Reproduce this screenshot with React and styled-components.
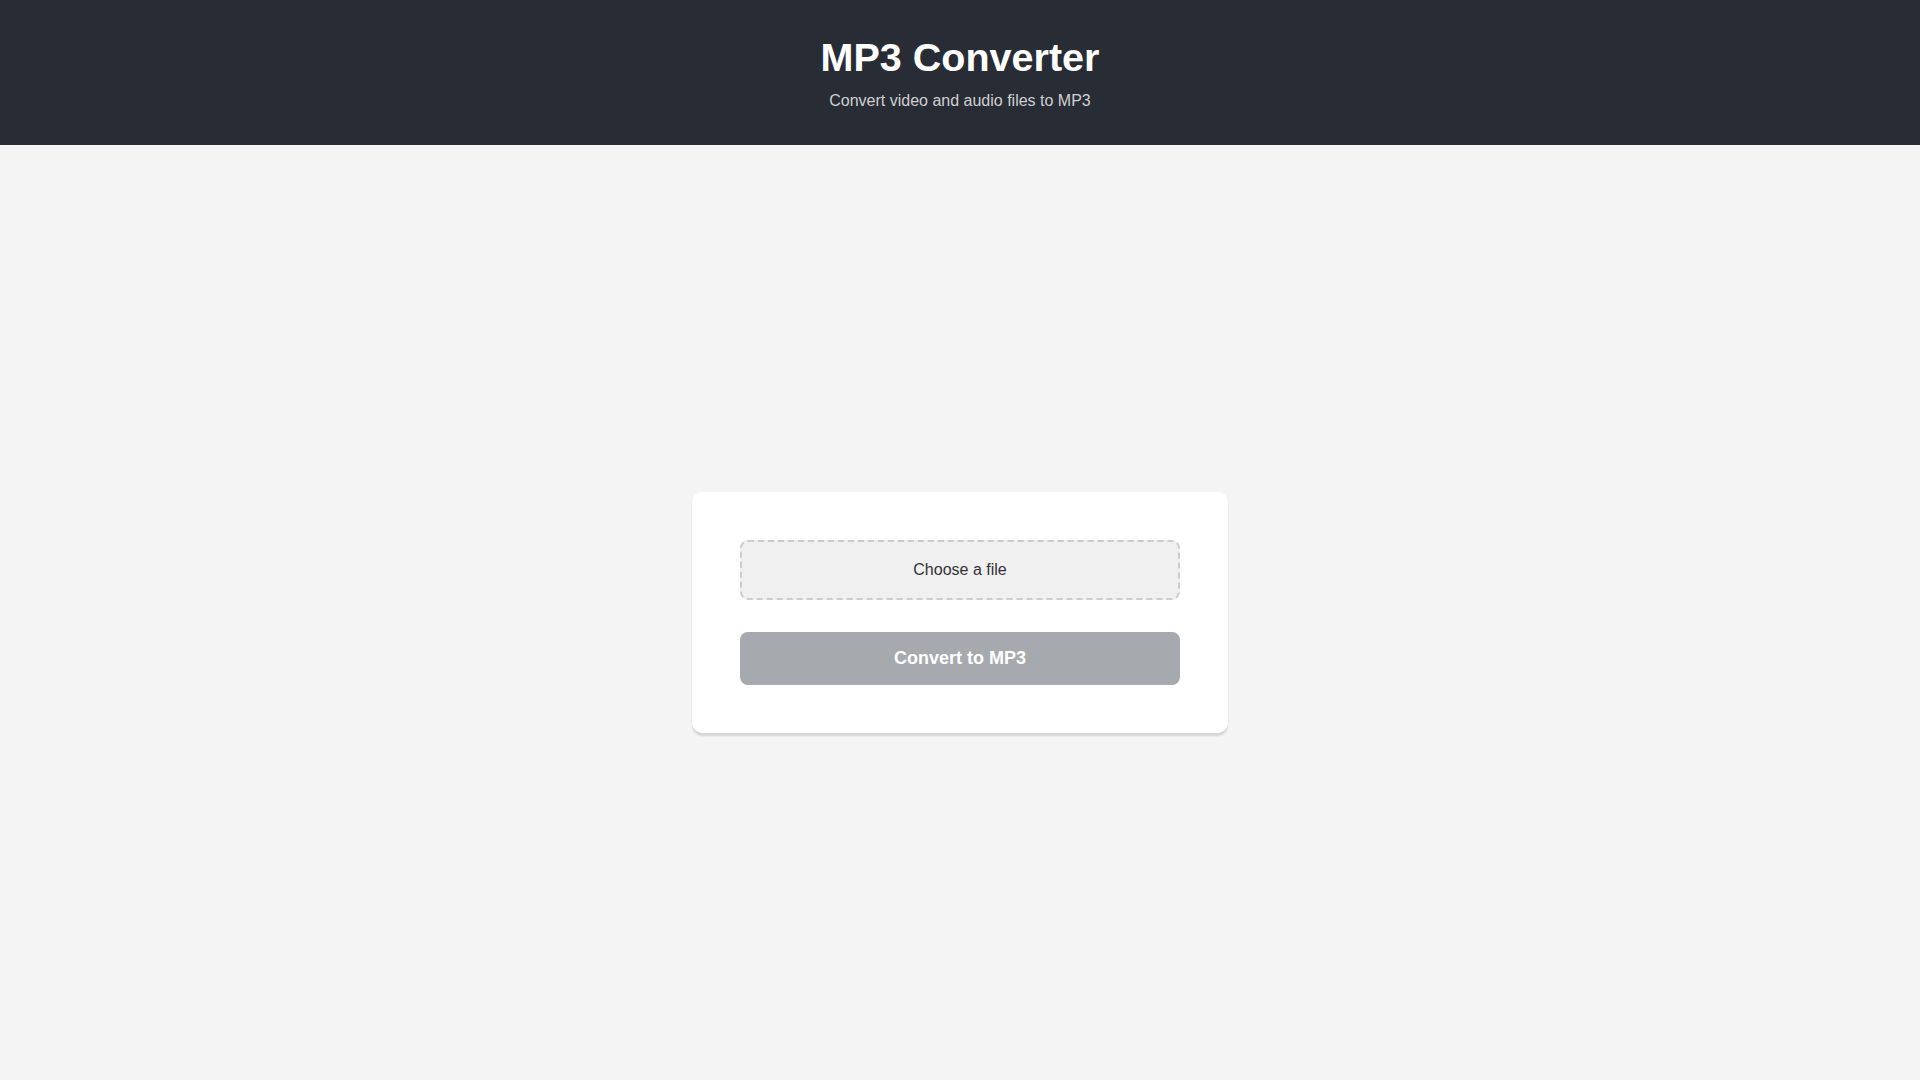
import React, { useState } from "react";
import styled, { createGlobalStyle } from "styled-components";

const GlobalStyle = createGlobalStyle`
  * {
    box-sizing: border-box;
  }
  body {
    margin: 0;
    background-color: #f4f4f4;
    font-family: "Liberation Sans", Arial, sans-serif;
  }
`;

const App = () => {
  const [file, setFile] = useState(null);

  return (
    <>
      <GlobalStyle />
      <Header>
        <h1>MP3 Converter</h1>
        <p>Convert video and audio files to MP3</p>
      </Header>
      <Main>
        <Card>
          <FilePicker>
            <input
              type="file"
              accept="video/*,audio/*"
              onChange={(e) => setFile(e.target.files[0] || null)}
            />
            {file ? file.name : "Choose a file"}
          </FilePicker>
          <ConvertButton disabled={!file}>Convert to MP3</ConvertButton>
        </Card>
      </Main>
    </>
  );
};

const Header = styled.header`
  background-color: #282c34;
  color: #fff;
  text-align: center;
  padding: 35px 0 35px;
  h1 {
    margin: 0;
    font-size: 39.5px;
    font-weight: 700;
  }
  p {
    margin: 12px 0 0;
    font-size: 16px;
    color: #cfd0d2;
  }
`;

const Main = styled.main`
  min-height: calc(100vh - 146px);
  display: flex;
  justify-content: center;
  align-items: center;
`;

const Card = styled.div`
  width: 536px;
  padding: 48px;
  background-color: #fff;
  border-radius: 10px;
  box-shadow: 0 3px 2px rgba(0, 0, 0, 0.13);
  display: flex;
  flex-direction: column;
  gap: 32px;
`;

const FilePicker = styled.label`
  display: block;
  padding: 19px 16px;
  border: 2px dashed #cccccc;
  border-radius: 8px;
  background-color: #f0f0f0;
  color: #333;
  font-size: 16px;
  text-align: center;
  cursor: pointer;
  input {
    display: none;
  }
`;

const ConvertButton = styled.button`
  width: 100%;
  padding: 16px;
  border: none;
  border-radius: 8px;
  background-color: ${(p) => (p.disabled ? "#a6aaae" : "#282c34")};
  color: #fff;
  font-family: inherit;
  font-size: 18px;
  font-weight: 700;
  cursor: ${(p) => (p.disabled ? "not-allowed" : "pointer")};
`;

export default App;
